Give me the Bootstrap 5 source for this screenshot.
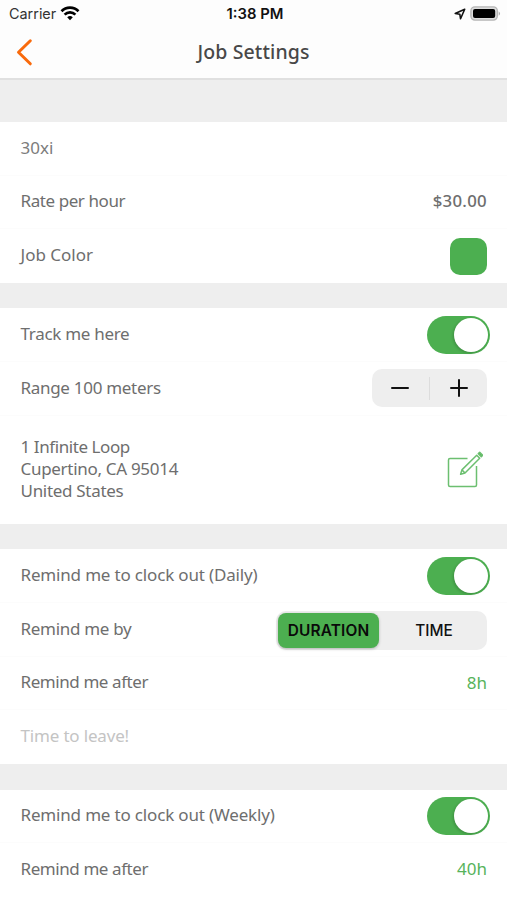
<!DOCTYPE html>
<html lang="en">
<head>
<meta charset="utf-8">
<meta name="viewport" content="width=device-width, initial-scale=1">
<title>Job Settings</title>
<link href="https://cdn.jsdelivr.net/npm/bootstrap@5.3.0/dist/css/bootstrap.min.css" rel="stylesheet">
<style>
:root { --green: #4caf50; --band: #eeeeee; --ink: #6e6e6e; }
body { font-family: "Noto Sans", sans-serif; font-size: 17px; line-height: 22px; color: var(--ink); background: #fff; overflow: hidden; }
.screen { width: 507px; height: 900px; overflow: hidden; }
.topbar { height: 80px; background: #fdfdfd; border-bottom: 2px solid #e0e0e0; }
.status { height: 27px; padding: 0 6px 0 9px; font-family: Inter, sans-serif; font-size: 14.4px; color: #111; }
.status .side { flex: 1 1 0; }
.carrier { color: #333; }
.clock { font-weight: 600; font-size: 14.8px; }
.titlebar { height: 49px; padding: 0 16px; }
.titlebar .side { width: 60px; }
.title { font-size: 19.5px; font-weight: 500; color: #484848; letter-spacing: .12px; }
.band { height: 25.4px; background: var(--band); }
.band-first { height: 42px; }
.rowx { height: 53.7px; padding: 0 20px 0 20.5px; border-bottom: 1px solid #fcfcfc; }
.rowx:last-child { border-bottom-color: transparent; }
.row-address { height: 108.2px; }
.label { padding-bottom: 1.5px; letter-spacing: -.17px; }
.snug { letter-spacing: -.3px; }
.tight { letter-spacing: -.42px; }
.wide { letter-spacing: 0; }
.sw { margin-right: -3px; width: 63px; height: 38px; padding: 2px; border-radius: 19px; background: var(--green); }
.knob { width: 34px; height: 34px; border-radius: 50%; background: #fff; box-shadow: -1px 1px 3px rgba(0,0,0,.2); }
.swatch { width: 37px; height: 37px; margin-top: 2px; border-radius: 10px; background: var(--green); }
.stepper { width: 115px; height: 38px; border-radius: 10px; background: var(--band); }
.stepper .sep { width: 1.5px; height: 23px; background: #dcdcdc; }
.seg { width: 211px; height: 39px; margin-top: 2px; padding: 2px; border-radius: 10px; background: var(--band); font-family: Inter, sans-serif; font-size: 15.4px; font-weight: 500; color: #111; }
.seg span { padding-top: 1px; }
.seg-on { width: 101px; height: 35px; border-radius: 8px; background: var(--green); font-weight: 600; color: #0a0a0a; letter-spacing: .15px; box-shadow: 0 1px 3px rgba(0,0,0,.25); }
.seg-off { padding-left: 4px; }
.val { color: #57b35b; padding-bottom: 1px; }
.amount { font-weight: 500; font-size: 16.8px; letter-spacing: .3px; padding-bottom: 2px; }
.ghost { color: #c4c4c4; }
.name { color: #7c7c7c; }
</style>
</head>
<body>
<div class="screen">
  <header class="topbar">
    <div class="status d-flex align-items-center">
      <div class="side d-flex align-items-center gap-1">
        <span class="carrier">Carrier</span>
        <svg width="20" height="15" viewBox="0 0 20 15" fill="none" stroke="#000" stroke-width="2.7"><path d="M1.500 5.200a12 12 0 0 1 17 0M4.600 8.600a7.700 7.700 0 0 1 10.800 0"/><path d="M10 14.200l-2.800-2.900a4 4 0 0 1 5.600 0z" fill="#000" stroke="none"/></svg>
      </div>
      <span class="clock">1:38 PM</span>
      <div class="side d-flex align-items-center justify-content-end">
        <svg class="me-1" width="12" height="12" viewBox="0 0 13 13" fill="none" stroke="#111" stroke-width="1.700" stroke-linejoin="round"><path d="M11.600 1.300L1.300 6l5 .7.8 5z"/></svg>
        <svg width="31" height="15" viewBox="0 0 31 15"><rect x=".9" y=".9" width="26.400" height="13.200" rx="4" fill="#ddd" stroke="#b5b5b5" stroke-width="1.400"/><rect x="3" y="2.900" width="22.200" height="9.200" rx="2" fill="#000"/><path d="M28.700 5.200q2.600 2.300 0 4.600z" fill="#aaa"/></svg>
      </div>
    </div>
    <div class="titlebar d-flex align-items-center justify-content-between">
      <div class="side d-flex"><svg width="18" height="28" viewBox="0 0 18 28" fill="none" stroke="#f96a0c" stroke-width="3" stroke-linecap="round" stroke-linejoin="round"><path d="M14.300 2.800L2.500 14.300l11.800 11.500"/></svg></div>
      <div class="title">Job Settings</div>
      <div class="side"></div>
    </div>
  </header>
  <div class="band band-first"></div>
  <section>
    <div class="rowx d-flex align-items-center justify-content-between"><span class="label wide name">30xi</span></div>
    <div class="rowx d-flex align-items-center justify-content-between"><span class="label tight">Rate per hour</span><span class="amount">$30.00</span></div>
    <div class="rowx d-flex align-items-center justify-content-between"><span class="label wide">Job Color</span><span class="swatch"></span></div>
  </section>
  <div class="band"></div>
  <section>
    <div class="rowx d-flex align-items-center justify-content-between"><span class="label snug">Track me here</span><span class="sw d-flex justify-content-end"><span class="knob"></span></span></div>
    <div class="rowx d-flex align-items-center justify-content-between"><span class="label snug">Range 100 meters</span>
      <div class="stepper d-flex align-items-center">
        <span class="flex-fill d-flex justify-content-center"><svg width="18" height="18" viewBox="0 0 18 18" stroke="#111" stroke-width="2" stroke-linecap="round"><path d="M1 9h16"/></svg></span>
        <span class="sep"></span>
        <span class="flex-fill d-flex justify-content-center"><svg width="18" height="18" viewBox="0 0 18 18" stroke="#111" stroke-width="2" stroke-linecap="round"><path d="M1 9h16M9 1v16"/></svg></span>
      </div>
    </div>
    <div class="rowx row-address d-flex align-items-center justify-content-between"><span class="label"><span class="tight">1 Infinite Loop</span><br><span class="snug">Cupertino, CA 95014</span><br><span class="snug">United States</span></span>
      <svg class="me-1" width="36" height="38" viewBox="0 0 36 38" fill="none" stroke="#6cbf70" stroke-width="1.500" stroke-linejoin="round"><path d="M20.500 8.500H3q-1.500 0-1.500 1.500v25q0 1.500 1.500 1.500h25q1.500 0 1.500-1.500V16"/><path d="M13.600 24.300l1.300-4.400L29.700 5.200l3 3L18 23zM14.900 19.900l3.100 3.100"/><path d="M31.300 3.600l1.400-1.300 3 3-1.400 1.300z" fill="#4caf50"/></svg>
    </div>
  </section>
  <div class="band"></div>
  <section>
    <div class="rowx d-flex align-items-center justify-content-between"><span class="label">Remind me to clock out (Daily)</span><span class="sw d-flex justify-content-end"><span class="knob"></span></span></div>
    <div class="rowx d-flex align-items-center justify-content-between"><span class="label snug">Remind me by</span>
      <div class="seg d-flex align-items-center"><span class="seg-on d-flex align-items-center justify-content-center">DURATION</span><span class="seg-off flex-fill text-center">TIME</span></div>
    </div>
    <div class="rowx d-flex align-items-center justify-content-between"><span class="label tight">Remind me after</span><span class="val">8h</span></div>
    <div class="rowx d-flex align-items-center justify-content-between"><span class="label ghost">Time to leave!</span></div>
  </section>
  <div class="band"></div>
  <section>
    <div class="rowx d-flex align-items-center justify-content-between"><span class="label">Remind me to clock out (Weekly)</span><span class="sw d-flex justify-content-end"><span class="knob"></span></span></div>
    <div class="rowx d-flex align-items-center justify-content-between"><span class="label tight">Remind me after</span><span class="val">40h</span></div>
  </section>
</div>
<script src="https://cdn.jsdelivr.net/npm/bootstrap@5.3.0/dist/js/bootstrap.bundle.min.js"></script>
</body>
</html>
